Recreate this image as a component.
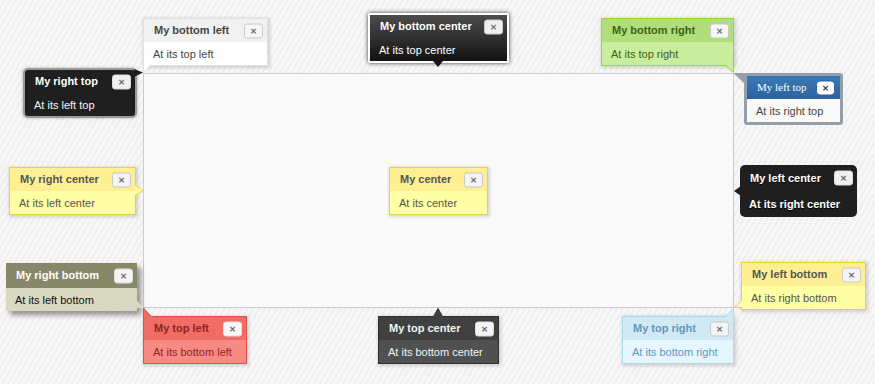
type Tip = {
  pos: string;
  box: string;
  bar: string;
  body: string;
  close: string;
  title: string;
  text: string;
};

const shadow = "shadow-[1px_1px_3px_1px_rgba(0,0,0,0.15)]";
const barBase = "relative whitespace-nowrap py-[5px] pl-[10px] pr-[35px] text-[11px] font-bold leading-[13px]";
const bodyBase = "whitespace-nowrap px-[9px] pb-[5px] pt-[6px] text-[11px] leading-[12px]";
const closeBase =
  "absolute right-[4px] top-1/2 -translate-y-1/2 flex h-[15px] w-[19px] items-center justify-center rounded-[3px] border font-['DejaVu_Sans',sans-serif] text-[9px] font-bold leading-none";

const tooltips: Tip[] = [
  {
    pos: "left-[143px] top-[18px] w-[125px]",
    box: `border border-[#e2e2e2] bg-white text-[#454545] ${shadow}`,
    bar: `${barBase} bg-[#f1f1f1]`,
    body: bodyBase,
    close: `${closeBase} border-[#c9c9c9] bg-[#f7f7f7] text-[#666]`,
    title: "My bottom left",
    text: "At its top left",
  },
  {
    pos: "left-[23px] top-[68px] w-[114px]",
    box: "rounded-[5px] border-2 border-[#9a9a9a] bg-[#1f1f1f] text-[#f3f3f3] shadow-[0_0_3px_rgba(0,0,0,0.3)]",
    bar: `${barBase} text-white`,
    body: bodyBase,
    close: `${closeBase} border-[#ddd] bg-[#f0f0f0] text-[#666]`,
    title: "My right top",
    text: "At its left top",
  },
  {
    pos: "left-[368px] top-[13px] w-[141px]",
    box: "rounded-[2px] border-2 border-white bg-[linear-gradient(#4c4c4c,#121212)] text-white shadow-[0_0_4px_#333]",
    bar: `${barBase} pl-[9px]`,
    body: bodyBase,
    close: `${closeBase} border-[#ccc] bg-[#f0f0f0] text-[#666]`,
    title: "My bottom center",
    text: "At its top center",
  },
  {
    pos: "left-[601px] top-[18px] w-[133px]",
    box: `border border-[#90d93f] bg-[#caed9e] text-[#3f6219] ${shadow}`,
    bar: `${barBase} bg-[#b0de78]`,
    body: bodyBase,
    close: `${closeBase} border-[#c9c9c9] bg-[#f7f7f7] text-[#666]`,
    title: "My bottom right",
    text: "At its top right",
  },
  {
    pos: "left-[744px] top-[73px] w-[99px]",
    box: "rounded-[3px] border-[3px] border-[#959fa9] bg-[#f9f9f9] text-[#454545]",
    bar: "relative whitespace-nowrap bg-[linear-gradient(#3a79b8,#2e629d)] py-[5px] pl-[10px] font-['Liberation_Serif',serif] text-[11px] font-normal leading-[13px] text-white",
    body: bodyBase,
    close: `${closeBase} right-[5px] rounded-[4px] border-[#2e629d] bg-white text-[#333]`,
    title: "My left top",
    text: "At its right top",
  },
  {
    pos: "left-[9px] top-[167px] w-[127px]",
    box: `border border-[#f1d031] bg-[#ffffa3] text-[#555] ${shadow}`,
    bar: `${barBase} bg-[#ffef93]`,
    body: bodyBase,
    close: `${closeBase} border-[#c9c9c9] bg-[#f4f4f4] text-[#666]`,
    title: "My right center",
    text: "At its left center",
  },
  {
    pos: "left-[389px] top-[167px] w-[99px]",
    box: `border border-[#f1d031] bg-[#ffffa3] text-[#555] ${shadow}`,
    bar: `${barBase} bg-[#ffef93]`,
    body: bodyBase,
    close: `${closeBase} border-[#c9c9c9] bg-[#f4f4f4] text-[#666]`,
    title: "My center",
    text: "At its center",
  },
  {
    pos: "left-[740px] top-[165px] w-[117px]",
    box: "rounded-[5px] bg-[#1f1f1f] text-white [text-shadow:0_1px_black]",
    bar: "relative whitespace-nowrap py-[5px] pl-[10px] pr-[35px] text-[11px] font-bold leading-[16px]",
    body: "whitespace-nowrap px-[9px] py-[5px] text-[11px] font-bold leading-[16px]",
    close: `${closeBase} border-[#ddd] bg-[#f0f0f0] text-[#666] [text-shadow:none]`,
    title: "My left center",
    text: "At its right center",
  },
  {
    pos: "left-[741px] top-[262px] w-[125px]",
    box: `border border-[#f1d031] bg-[#ffffa3] text-[#555] ${shadow}`,
    bar: `${barBase} bg-[#ffef93]`,
    body: bodyBase,
    close: `${closeBase} border-[#c9c9c9] bg-[#f4f4f4] text-[#666]`,
    title: "My left bottom",
    text: "At its right bottom",
  },
  {
    pos: "left-[6px] top-[263px] w-[131px]",
    box: "bg-[#d9d9c2] text-[#111] shadow-[4px_4px_5px_rgba(0,0,0,0.4)]",
    bar: `${barBase} py-[6px] bg-[#87876a] text-white`,
    body: bodyBase,
    close: `${closeBase} border-[#ddd] bg-[#f4f4f4] text-[#666]`,
    title: "My right bottom",
    text: "At its left bottom",
  },
  {
    pos: "left-[143px] top-[316px] w-[104px]",
    box: `border border-[#d95252] bg-[#f78b83] text-[#912323] ${shadow}`,
    bar: `${barBase} bg-[#f06d65]`,
    body: bodyBase,
    close: `${closeBase} border-[#e0e0e0] bg-[#f8f8f8] text-[#666]`,
    title: "My top left",
    text: "At its bottom left",
  },
  {
    pos: "left-[378px] top-[316px] w-[121px]",
    box: `border border-[#303030] bg-[#505050] text-[#f3f3f3] ${shadow}`,
    bar: `${barBase} bg-[#404040]`,
    body: bodyBase,
    close: `${closeBase} border-[#ddd] bg-[#f4f4f4] text-[#666]`,
    title: "My top center",
    text: "At its bottom center",
  },
  {
    pos: "left-[622px] top-[316px] w-[112px]",
    box: `border border-[#add9ed] bg-[#e5f6fe] text-[#5e99bd] ${shadow}`,
    bar: `${barBase} bg-[#d0e9f5]`,
    body: bodyBase,
    close: `${closeBase} border-[#c9c9c9] bg-[#f4f4f4] text-[#666]`,
    title: "My top right",
    text: "At its bottom right",
  },
];

function Tooltip({ t }: { t: Tip }) {
  return (
    <div className={`absolute ${t.pos} ${t.box}`}>
      <div className={t.bar}>
        {t.title}
        <span className={t.close}>×</span>
      </div>
      <div className={t.body}>{t.text}</div>
    </div>
  );
}

// little pointer tips, in page coordinates
function Tips() {
  return (
    <svg className="pointer-events-none absolute inset-0" width="875" height="384">
      {/* bottom left */}
      <polygon points="143.5,63 151,64.5 143.5,72.5" fill="#fff" />
      <polyline points="151,64.5 143.5,72.5 143.5,63" fill="none" stroke="#e2e2e2" />
      {/* right top */}
      <polygon points="134,69 143,72.5 134,77" fill="#1f1f1f" />
      {/* bottom center */}
      <polygon points="433,61 443,61 438,67" fill="#141414" />
      {/* bottom right */}
      <polygon points="725,64 733.5,64 733.5,72.5" fill="#caed9e" />
      <polyline points="725,65 733.5,72.5 733.5,64" fill="none" stroke="#90d93f" />
      {/* left top */}
      <polygon points="733.5,73 746,73 746,85" fill="#959fa9" />
      {/* right center */}
      <polygon points="135,185.5 143,190.5 135,195.5" fill="#ffffa3" />
      <polyline points="135.5,185.5 143,190.5 135.5,195.5" fill="none" stroke="#f1d031" />
      {/* left center */}
      <polygon points="741,186 734,191 741,196" fill="#1f1f1f" />
      {/* right bottom */}
      <polygon points="136,300 143.5,308 136,308" fill="#d9d9c2" />
      {/* left bottom */}
      <polygon points="742,300 742,308 734,308" fill="#ffffa3" />
      <polyline points="741.5,300.5 734.5,307.5 742,307.5" fill="none" stroke="#f1d031" />
      {/* top left */}
      <polygon points="143.5,308 143.5,317 152,317" fill="#f06d65" />
      <polyline points="143.5,317 143.5,308 151,316.5" fill="none" stroke="#d95252" />
      {/* top center */}
      <polygon points="433.5,317 438,308 442.5,317" fill="#404040" />
      <polyline points="433.5,316.5 438,308.5 442.5,316.5" fill="none" stroke="#303030" />
      {/* top right */}
      <polygon points="733.5,308 733.5,317 725,317" fill="#d0e9f5" />
      <polyline points="733.5,317 733.5,308 725.5,316.5" fill="none" stroke="#add9ed" />
    </svg>
  );
}

export default function App() {
  return (
    <main className="relative h-[384px] w-full overflow-hidden bg-[#f3f3f3] bg-[repeating-linear-gradient(-60deg,#efefef_0px,#efefef_2px,#f7f7f7_2px,#f7f7f7_5px)] font-['Liberation_Sans',Arial,sans-serif]">
      <div className="pl-[143px] pt-[73px]">
        <div className="h-[235px] w-[591px] border border-[#cccccc] bg-[#fafafa]" />
      </div>

      {tooltips.map((t) => (
        <Tooltip key={t.title} t={t} />
      ))}

      <Tips />
    </main>
  );
}
